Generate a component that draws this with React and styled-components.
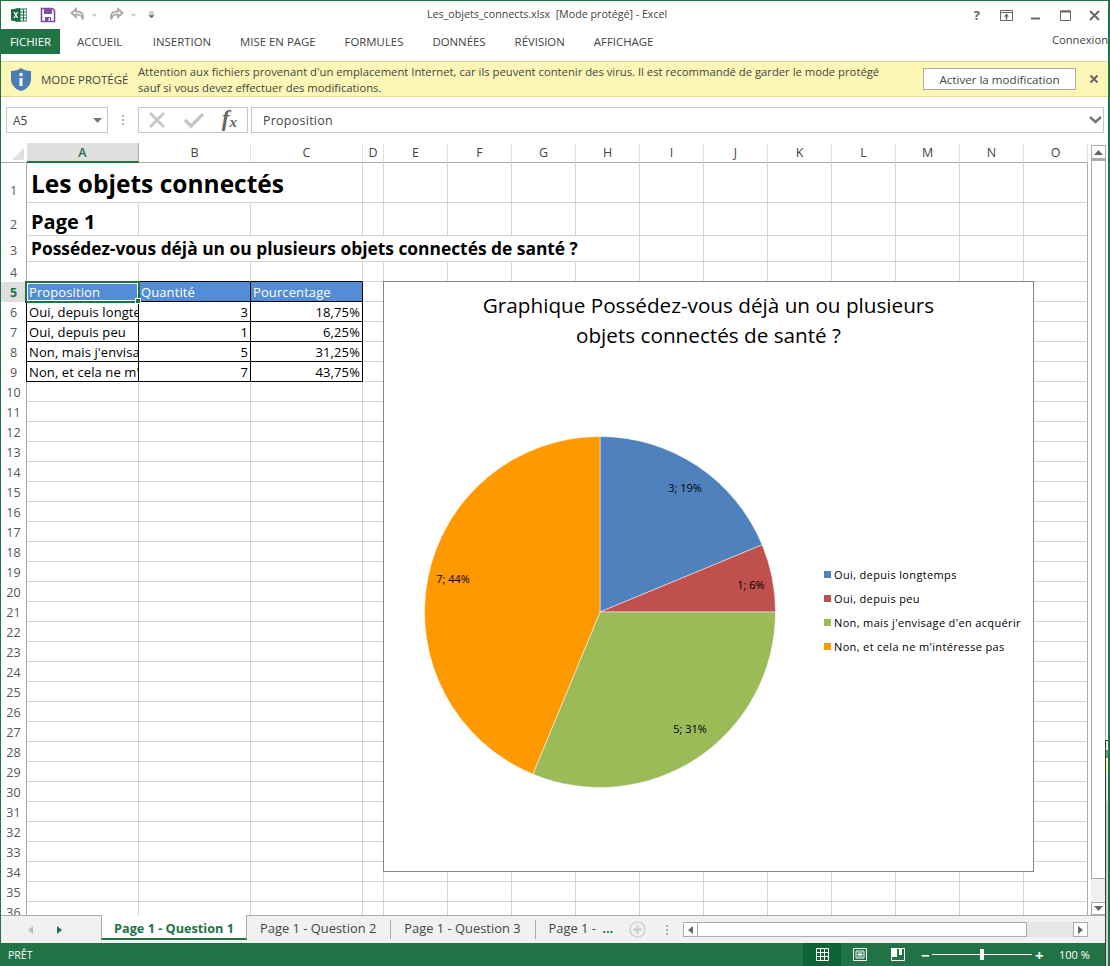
import React from 'react';
import styled, {createGlobalStyle} from 'styled-components';

const GREEN = '#217346';
const UI_FONT = '"Open Sans", "Noto Sans", sans-serif';

const columns = [
    {name: 'A', width: 112, active: true}, {name: 'B', width: 112}, {name: 'C', width: 112},
    {name: 'D', width: 21}, {name: 'E', width: 64}, {name: 'F', width: 64}, {name: 'G', width: 64},
    {name: 'H', width: 64}, {name: 'I', width: 64}, {name: 'J', width: 64}, {name: 'K', width: 64},
    {name: 'L', width: 64}, {name: 'M', width: 64}, {name: 'N', width: 64}, {name: 'O', width: 64},
];

const rowHeights = [40, 33, 26, 20];
for (let i = 0; i < 32; i++) rowHeights.push(20);

const tableRows = [
    ['Oui, depuis longtemps', '3', '18,75%'],
    ['Oui, depuis peu', '1', '6,25%'],
    ["Non, mais j'envisage d'en acquérir", '5', '31,25%'],
    ["Non, et cela ne m'intéresse pas", '7', '43,75%'],
];

const legend = [
    {label: 'Oui, depuis longtemps', color: '#4f81bd'},
    {label: 'Oui, depuis peu', color: '#c0504d'},
    {label: "Non, mais j'envisage d'en acquérir", color: '#9bbb59'},
    {label: "Non, et cela ne m'intéresse pas", color: '#ff9900'},
];

const slices = [
    {value: 18.75, color: '#4f81bd'},
    {value: 6.25, color: '#c0504d'},
    {value: 31.25, color: '#9bbb59'},
    {value: 43.75, color: '#ff9900'},
];

const slicePath = (start, end) => {
    const r = 175.5, c = 176;
    const point = (p) => {
        const a = (p / 100) * 2 * Math.PI;
        return `${c + r * Math.sin(a)} ${c - r * Math.cos(a)}`;
    };
    return `M${c} ${c} L${point(start)} A${r} ${r} 0 ${end - start > 50 ? 1 : 0} 1 ${point(end)} Z`;
};

// long titles spill over the next cells, and those lose their gridline
const spillsOver = (row, col) => (row === 0 && col < 2) || (row === 2 && col < 7);

const renderCell = (row, col) => {
    if (row === 0 && col === 0) return <Title>Les objets connectés</Title>;
    if (row === 1 && col === 0) return <PageTitle>Page 1</PageTitle>;
    if (row === 2 && col === 0) return <Question>Possédez-vous déjà un ou plusieurs objets connectés de santé ?</Question>;
    return null;
};

export default function App() {
    let accumulated = 0;

    return (
        <>
            <GlobalStyle />
            <Window>
                <TitleBar>
                    <QuickAccess>
                        <svg width="16" height="16" viewBox="0 0 16 16">
                            <rect x="5" y="2" width="11" height="12" fill="#fff" stroke={GREEN} />
                            <path d="M9 2v12M12.5 2v12M5 5h11M5 8h11M5 11h11" stroke={GREEN} strokeWidth="1" />
                            <path d="M0 2.5 9 1v14L0 13.5z" fill="#1e6b41" />
                            <path d="M2.4 5h1.5l.9 1.8L5.8 5h1.4L5.5 8l1.8 3H5.8l-1-1.9L3.8 11H2.4l1.7-3z" fill="#fff" />
                        </svg>
                        <svg width="16" height="16" viewBox="0 0 16 16" style={{marginLeft: 13}}>
                            <path d="M1.5 1.5h11l2 2v11h-13z" fill="none" stroke="#7e4ea3" strokeWidth="1.6" />
                            <path d="M4 1.5h8v5.5H4z" fill="#7e4ea3" />
                            <path d="M5 10h6v5H5z" fill="#7e4ea3" />
                            <path d="M8.6 11h1.4v3H8.6z" fill="#fff" />
                        </svg>
                        <svg width="34" height="16" viewBox="0 0 34 16" style={{marginLeft: 14}}>
                            <path d="M6 2 1.5 6 6 10V7.400c4 0 6 .8 6.500 5 1.500-5-.5-8-6.500-8z" fill="none" stroke="#a8a8a8" strokeWidth="1.8" />
                            <path d="M22 7h5l-2.500 3z" fill="#c6c6c6" />
                        </svg>
                        <svg width="34" height="16" viewBox="0 0 34 16" style={{marginLeft: 6}}>
                            <path d="M8 2l4.500 4L8 10V7.400c-4 0-6 .8-6.500 5-1.500-5 .5-8 6.500-8z" fill="none" stroke="#a8a8a8" strokeWidth="1.8" />
                            <path d="M21 7h5l-2.500 3z" fill="#c6c6c6" />
                        </svg>
                        <svg width="7" height="8" viewBox="0 0 7 8" style={{marginLeft: 4}}>
                            <path d="M1 1h5M1 3h5M1 4.500h5L3.500 7z" fill="#666" stroke="#666" strokeWidth=".6" />
                        </svg>
                    </QuickAccess>
                    <WindowTitle>Les_objets_connects.xlsx  [Mode protégé] - Excel</WindowTitle>
                    <WindowControls>
                        <HelpMark>?</HelpMark>
                        <svg width="13" height="11" viewBox="0 0 13 11" style={{marginLeft: 20}}>
                            <path d="M.5 .5h12v10H.5zM.5 2.500h12" fill="none" stroke="#666" />
                            <path d="M6.500 3.500 9 6.500H7.300v3H5.700v-3H4z" fill="#666" />
                        </svg>
                        <svg width="11" height="11" viewBox="0 0 11 11" style={{marginLeft: 17}}>
                            <path d="M1 8.500h9" stroke="#666" strokeWidth="2" />
                        </svg>
                        <svg width="11" height="11" viewBox="0 0 11 11" style={{marginLeft: 19}}>
                            <path d="M.5 1h10v9.500H.5z" fill="none" stroke="#666" />
                            <path d="M.5 1.500h10" stroke="#666" strokeWidth="2" />
                        </svg>
                        <svg width="11" height="11" viewBox="0 0 11 11" style={{marginLeft: 18}}>
                            <path d="M1 1l9 9M10 1l-9 9" stroke="#666" strokeWidth="2" />
                        </svg>
                    </WindowControls>
                </TitleBar>

                <RibbonTabs>
                    <FileTab>FICHIER</FileTab>
                    <RibbonTab>ACCUEIL</RibbonTab>
                    <RibbonTab>INSERTION</RibbonTab>
                    <RibbonTab>MISE EN PAGE</RibbonTab>
                    <RibbonTab>FORMULES</RibbonTab>
                    <RibbonTab>DONNÉES</RibbonTab>
                    <RibbonTab>RÉVISION</RibbonTab>
                    <RibbonTab>AFFICHAGE</RibbonTab>
                    <SignIn>Connexion</SignIn>
                </RibbonTabs>

                <ProtectedBar>
                    <svg width="20" height="23" viewBox="0 0 20 23">
                        <path d="M10 0c2.500 2 6 3 10 3v8c0 6-4 10-10 12C4 21 0 17 0 11V3c4 0 7.500-1 10-3z" fill="#4a7db8" />
                        <circle cx="10" cy="6.500" r="1.800" fill="#fff" />
                        <path d="M8.500 10h3v8h-3z" fill="#fff" />
                    </svg>
                    <ProtectedLabel>MODE PROTÉGÉ</ProtectedLabel>
                    <ProtectedMessage>
                        Attention aux fichiers provenant d'un emplacement Internet, car ils peuvent contenir des virus. Il est recommandé de garder le mode protégé
                        <br />
                        sauf si vous devez effectuer des modifications.
                    </ProtectedMessage>
                    <EnableButton>Activer la modification</EnableButton>
                    <svg width="10" height="10" viewBox="0 0 10 10" style={{marginLeft: 13}}>
                        <path d="M1.500 1.500l7 7M8.500 1.500l-7 7" stroke="#666" strokeWidth="2" />
                    </svg>
                </ProtectedBar>

                <FormulaBar>
                    <NameBox>
                        A5
                        <svg width="9" height="5" viewBox="0 0 9 5"><path d="M0 0h9L4.500 5z" fill="#777" /></svg>
                    </NameBox>
                    <Grip />
                    <FormulaButtons>
                        <svg width="18" height="18" viewBox="0 0 18 18">
                            <path d="M2 2l14 14M16 2 2 16" stroke="#c6c6c6" strokeWidth="2.500" />
                        </svg>
                        <svg width="20" height="18" viewBox="0 0 20 18">
                            <path d="M1 9l6 6L19 3" fill="none" stroke="#c6c6c6" strokeWidth="3.500" />
                        </svg>
                        <FxLabel>f<sub>x</sub></FxLabel>
                    </FormulaButtons>
                    <FormulaInput>
                        Proposition
                        <svg width="13" height="8" viewBox="0 0 13 8">
                            <path d="M1 1l5.500 5L12 1" fill="none" stroke="#777" strokeWidth="2.500" />
                        </svg>
                    </FormulaInput>
                </FormulaBar>

                <SheetArea>
                    <SheetMain>
                        <ColumnHeaders>
                            <Corner><CornerMark /></Corner>
                            {columns.map((col) => (
                                <ColumnHeader key={col.name} $width={col.width} $active={col.active}>{col.name}</ColumnHeader>
                            ))}
                        </ColumnHeaders>
                        <SheetBody>
                            {rowHeights.map((height, row) => (
                                <SheetRow key={row} $height={height}>
                                    <RowHeader $active={row === 4} $table={row >= 5 && row <= 8} $pad={row === 0 ? 5 : row < 3 ? 4 : 2}>
                                        {row + 1}
                                    </RowHeader>
                                    {columns.map((col, c) => {
                                        if (row === 4 && c < 3) {
                                            return (
                                                <HeadCell key={col.name} $width={col.width}>
                                                    {['Proposition', 'Quantité', 'Pourcentage'][c]}
                                                    {c === 0 && <Selection><SelectionHandle /></Selection>}
                                                </HeadCell>
                                            );
                                        }
                                        if (row >= 5 && row <= 8 && c < 3) {
                                            return (
                                                <DataCell key={col.name} $width={col.width} $number={c > 0}>
                                                    {tableRows[row - 5][c]}
                                                </DataCell>
                                            );
                                        }
                                        return (
                                            <Cell key={col.name} $width={col.width} $spill={spillsOver(row, c)} $aboveTable={row === 3 && c < 3}>
                                                {renderCell(row, c)}
                                            </Cell>
                                        );
                                    })}
                                </SheetRow>
                            ))}
                            <Chart>
                                <ChartTitle>
                                    Graphique Possédez-vous déjà un ou plusieurs
                                    <br />
                                    objets connectés de santé ?
                                </ChartTitle>
                                <ChartBody>
                                    <svg width="352" height="352" viewBox="0 0 352 352">
                                        {slices.map((s) => {
                                            const start = accumulated;
                                            accumulated += s.value;
                                            return <path key={s.color} d={slicePath(start, accumulated)} fill={s.color} stroke="#fff" strokeWidth=".5" />;
                                        })}
                                        <PieLabel x="261" y="56" textAnchor="middle">3; 19%</PieLabel>
                                        <PieLabel x="327" y="153" textAnchor="middle">1; 6%</PieLabel>
                                        <PieLabel x="266" y="297" textAnchor="middle">5; 31%</PieLabel>
                                        <PieLabel x="29" y="147" textAnchor="middle">7; 44%</PieLabel>
                                    </svg>
                                    <Legend>
                                        {legend.map((item) => (
                                            <LegendItem key={item.label}>
                                                <LegendSwatch $color={item.color} />
                                                {item.label}
                                            </LegendItem>
                                        ))}
                                    </Legend>
                                </ChartBody>
                            </Chart>
                        </SheetBody>
                    </SheetMain>
                    <VerticalScroll>
                        <ScrollButton $height={14}>
                            <svg width="9" height="5" viewBox="0 0 9 5"><path d="M0 5h9L4.500 0z" fill="#666" /></svg>
                        </ScrollButton>
                        <VerticalThumb />
                        <ScrollButton $height={13}>
                            <svg width="9" height="5" viewBox="0 0 9 5"><path d="M0 0h9L4.500 5z" fill="#666" /></svg>
                        </ScrollButton>
                    </VerticalScroll>
                </SheetArea>

                <TabStrip>
                    <TabNav>
                        <svg width="5" height="8" viewBox="0 0 5 8"><path d="M5 0v8L0 4z" fill="#bdbdbd" /></svg>
                        <svg width="5" height="8" viewBox="0 0 5 8"><path d="M0 0v8l5-4z" fill={GREEN} /></svg>
                    </TabNav>
                    <ActiveSheetTab>Page 1 - Question 1</ActiveSheetTab>
                    <SheetTab>Page 1 - Question 2</SheetTab>
                    <TabDivider />
                    <SheetTab>Page 1 - Question 3</SheetTab>
                    <TabDivider />
                    <CutSheetTab>Page 1 - <Ellipsis>...</Ellipsis></CutSheetTab>
                    <svg width="17" height="17" viewBox="0 0 17 17">
                        <circle cx="8.500" cy="8.500" r="7.500" fill="none" stroke="#c8c8c8" strokeWidth="1.200" />
                        <path d="M8.500 4.500v8M4.500 8.500h8" stroke="#c8c8c8" strokeWidth="2" />
                    </svg>
                    <StripGrip />
                    <HorizontalScroll>
                        <ArrowBox>
                            <svg width="5" height="8" viewBox="0 0 5 8"><path d="M5 0v8L0 4z" fill="#666" /></svg>
                        </ArrowBox>
                        <HorizontalThumb />
                        <ScrollTrack />
                        <ArrowBox>
                            <svg width="5" height="8" viewBox="0 0 5 8"><path d="M0 0v8l5-4z" fill="#666" /></svg>
                        </ArrowBox>
                    </HorizontalScroll>
                </TabStrip>

                <StatusBar>
                    <StatusText>PRÊT</StatusText>
                    <ViewButtons>
                        <ViewButton $active>
                            <svg width="13" height="13" viewBox="0 0 13 13">
                                <path d="M.5 .5h12v12H.5zM4.500 .5v12M8.500 .5v12M.5 4.500h12M.5 8.500h12" fill="none" stroke="#fff" />
                            </svg>
                        </ViewButton>
                        <ViewButton>
                            <svg width="14" height="13" viewBox="0 0 14 13">
                                <path d="M.5 .5h13v12H.5zM3 3h8v7H3z" fill="none" stroke="#fff" />
                                <path d="M4.500 5h5M4.500 6.500h5M4.500 8h5" stroke="#fff" />
                            </svg>
                        </ViewButton>
                        <ViewButton>
                            <svg width="14" height="13" viewBox="0 0 14 13">
                                <path d="M.5 .5h13v12H.5z" fill="none" stroke="#fff" />
                                <path d="M0 0h6v9H0zM8 0h3v7H8z" fill="#fff" />
                            </svg>
                        </ViewButton>
                    </ViewButtons>
                    <ZoomControl>
                        <ZoomSign>−</ZoomSign>
                        <ZoomSlider><ZoomThumb /></ZoomSlider>
                        <ZoomSign>+</ZoomSign>
                    </ZoomControl>
                    <ZoomValue>100 %</ZoomValue>
                </StatusBar>
                <WindowBehind />
            </Window>
        </>
    );
}

const GlobalStyle = createGlobalStyle`
    html, body {
        margin: 0;
        padding: 0;
        background: #fff;
    }
    sub {
        font-size: 15px;
        vertical-align: -1px;
    }
`

const Window = styled.div`
    width: 1110px;
    height: 966px;
    box-sizing: border-box;
    border-top: 1px solid ${GREEN};
    border-left: 1px solid ${GREEN};
    border-right: 2px solid ${GREEN};
    display: flex;
    flex-direction: column;
    overflow: hidden;
    position: relative;
    font-family: ${UI_FONT};
    color: #444;
    background: #fff;
`

// edge of another window that sticks out on the right of the screen
const WindowBehind = styled.div`
    position: absolute;
    left: 1104px;
    top: 739px;
    width: 5px;
    height: 227px;
    box-sizing: border-box;
    border-left: 1px solid #3c3c3c;
    border-top: 1px solid #3c3c3c;
    background: linear-gradient(#e8eeea 0 9px, #5f9e7f 9px 17px, #f6f3b5 17px 30px, #dfe8e3 30px 60px, #c4d4cc 60px);
`

const TitleBar = styled.div`
    height: 28px;
    display: flex;
    align-items: center;
    position: relative;
    flex: none;
`

const QuickAccess = styled.div`
    display: flex;
    align-items: center;
    padding-left: 10px;
`

const WindowTitle = styled.div`
    position: absolute;
    left: 426px;
    top: 6px;
    font-size: 10.7px;
    white-space: pre;
    color: #444;
`

const WindowControls = styled.div`
    margin-left: auto;
    display: flex;
    align-items: center;
    padding-right: 8px;
`

const HelpMark = styled.span`
    font-size: 13px;
    font-weight: 700;
    color: #666;
    line-height: 14px;
`

const RibbonTabs = styled.div`
    height: 25px;
    flex: none;
    display: flex;
    align-items: stretch;
    font-size: 11.4px;
`

const FileTab = styled.div`
    width: 59px;
    background: ${GREEN};
    color: #fff;
    display: flex;
    align-items: center;
    justify-content: center;
`

const RibbonTab = styled.div`
    margin-left: 17px;
    margin-right: 12px;
    display: flex;
    align-items: center;
    color: #444;
    &:nth-child(2) {
        margin-right: 13.5px;
    }
`

const SignIn = styled.div`
    margin-left: auto;
    font-size: 11.2px;
    color: #444;
    padding-top: 3px;
`

const ProtectedBar = styled.div`
    margin-top: 7px;
    height: 34px;
    flex: none;
    display: flex;
    align-items: center;
    padding-left: 10px;
    background: #fcf7b6;
    border-top: 1px solid #e2d98c;
    border-bottom: 1px solid #e2d98c;
`

const ProtectedLabel = styled.div`
    margin-left: 10px;
    width: 97px;
    font-size: 11.5px;
    color: #444;
    white-space: nowrap;
`

const ProtectedMessage = styled.div`
    font-size: 11.27px;
    line-height: 16px;
    padding-top: 1px;
    color: #444;
    width: 785px;
    white-space: nowrap;
`

const EnableButton = styled.div`
    width: 153px;
    height: 22px;
    box-sizing: border-box;
    border: 1px solid #ababab;
    background: #fff;
    font-size: 11.6px;
    color: #444;
    display: flex;
    align-items: center;
    justify-content: center;
`

const FormulaBar = styled.div`
    margin-top: 10px;
    height: 26px;
    flex: none;
    display: flex;
    align-items: stretch;
    padding-left: 5px;
`

const NameBox = styled.div`
    width: 102px;
    box-sizing: border-box;
    border: 1px solid #c6c6c6;
    display: flex;
    align-items: center;
    justify-content: space-between;
    padding: 0 5px 0 6px;
    font-size: 12px;
    color: #444;
`

const Grip = styled.div`
    width: 2px;
    height: 10px;
    align-self: center;
    margin: 0 14px;
    background: repeating-linear-gradient(#b0b0b0 0 2px, transparent 2px 4px);
`

const FormulaButtons = styled.div`
    width: 110px;
    box-sizing: border-box;
    border: 1px solid #c6c6c6;
    display: flex;
    align-items: center;
    justify-content: space-between;
    padding: 0 10px 0 9px;
`

const FxLabel = styled.span`
    font-family: "Liberation Serif", serif;
    font-style: italic;
    font-weight: 700;
    font-size: 23px;
    color: #666;
    line-height: 22px;
`

const FormulaInput = styled.div`
    width: 853px;
    margin-left: 3px;
    box-sizing: border-box;
    border: 1px solid #c6c6c6;
    display: flex;
    align-items: center;
    justify-content: space-between;
    padding: 0 1px 0 11px;
    font-size: 12.4px;
    letter-spacing: .3px;
    color: #444;
`

const SheetArea = styled.div`
    margin-top: 10px;
    flex: 1;
    min-height: 0;
    display: flex;
`

const SheetMain = styled.div`
    width: 1087px;
    flex: none;
`

const ColumnHeaders = styled.div`
    display: flex;
    height: 20px;
`

const Corner = styled.div`
    width: 26px;
    flex: none;
    display: flex;
    align-items: flex-end;
    justify-content: flex-end;
    padding: 0 3px 2px 0;
    box-sizing: border-box;
    border-bottom: 1px solid #ababab;
`

const CornerMark = styled.div`
    width: 0;
    height: 0;
    border-left: 12px solid transparent;
    border-bottom: 12px solid #dfdfdf;
`

const ColumnHeader = styled.div`
    width: ${props => props.$width}px;
    flex: none;
    box-sizing: border-box;
    font-size: 12.5px;
    display: flex;
    align-items: center;
    justify-content: center;
    color: ${props => props.$active ? GREEN : '#444'};
    font-weight: ${props => props.$active ? 600 : 400};
    background: ${props => props.$active ? '#dfdfdf' : '#fff'};
    border-right: 1px solid ${props => props.$active ? '#ababab' : '#e1e1e1'};
    border-bottom: ${props => props.$active ? `2px solid ${GREEN}` : '1px solid #ababab'};
`

const SheetBody = styled.div`
    position: relative;
    width: 1087px;
    height: 752px;
    overflow: hidden;
`

const SheetRow = styled.div`
    display: flex;
    height: ${props => props.$height}px;
`

const RowHeader = styled.div`
    width: 26px;
    flex: none;
    box-sizing: border-box;
    font-size: 12.5px;
    line-height: 14px;
    display: flex;
    align-items: flex-end;
    justify-content: center;
    padding-bottom: ${props => props.$pad}px;
    color: ${props => props.$active ? GREEN : '#555'};
    font-weight: ${props => props.$active ? 700 : 400};
    background: ${props => props.$active ? '#dfdfdf' : '#fff'};
    border-right: 1px solid ${props => props.$table ? '#000' : '#ababab'};
`

const Cell = styled.div`
    width: ${props => props.$width}px;
    flex: none;
    box-sizing: border-box;
    border-right: 1px solid ${props => props.$spill ? 'transparent' : '#d4d4d4'};
    border-bottom: 1px solid ${props => props.$aboveTable ? '#000' : '#d4d4d4'};
    position: relative;
    &:last-child {
        border-right-color: #ababab;
    }
`

const overflowText = `
    position: absolute;
    left: 4px;
    white-space: nowrap;
    color: #000;
    font-weight: 700;
`

const Title = styled.div`
    ${overflowText}
    top: 5px;
    font-size: 24.5px;
    line-height: 32px;
`

const PageTitle = styled.div`
    ${overflowText}
    top: 5px;
    font-size: 20px;
    line-height: 28px;
`

const Question = styled.div`
    ${overflowText}
    top: 0;
    font-size: 17.37px;
    line-height: 24px;
`

const HeadCell = styled.div`
    width: ${props => props.$width}px;
    flex: none;
    box-sizing: border-box;
    position: relative;
    background: #538dd5;
    color: #fff;
    font-size: 13px;
    letter-spacing: .1px;
    line-height: 18px;
    padding: 1px 0 0 2px;
    border-right: 1px solid #000;
    border-bottom: 1px solid #000;
`

const Selection = styled.span`
    position: absolute;
    left: -2px;
    top: -1px;
    right: -2px;
    bottom: -2px;
    border: 2px solid ${GREEN};
    box-shadow: inset 0 0 0 1px #fff;
    z-index: 1;
`

const SelectionHandle = styled.span`
    position: absolute;
    right: -3px;
    bottom: -3px;
    width: 4px;
    height: 4px;
    background: ${GREEN};
    border: 1px solid #fff;
`

const DataCell = styled.div`
    width: ${props => props.$width}px;
    flex: none;
    box-sizing: border-box;
    overflow: hidden;
    white-space: nowrap;
    color: #000;
    font-size: 13px;
    letter-spacing: .1px;
    line-height: 19px;
    text-align: ${props => props.$number ? 'right' : 'left'};
    padding: 1px ${props => props.$number ? 2 : 0}px 0 ${props => props.$number ? 0 : 2}px;
    border-right: 1px solid #000;
    border-bottom: 1px solid #000;
`

const Chart = styled.div`
    position: absolute;
    left: 382px;
    top: 118px;
    width: 651px;
    height: 591px;
    box-sizing: border-box;
    border: 1px solid #868686;
    background: #fff;
    display: flex;
    flex-direction: column;
    z-index: 2;
`

const ChartTitle = styled.div`
    text-align: center;
    font-size: 20.7px;
    line-height: 30px;
    color: #000;
    padding: 8px 0 0 0;
`

const ChartBody = styled.div`
    display: flex;
    align-items: flex-start;
    padding: 86px 0 0 40px;
`

const PieLabel = styled.text`
    font-family: ${UI_FONT};
    font-size: 11px;
    fill: #000;
`

const Legend = styled.div`
    margin: 130px 0 0 48px;
    display: flex;
    flex-direction: column;
    gap: 8.3px;
`

const LegendItem = styled.div`
    display: flex;
    align-items: center;
    gap: 3px;
    height: 16px;
    font-size: 11px;
    letter-spacing: .35px;
    color: #000;
    white-space: nowrap;
`

const LegendSwatch = styled.span`
    width: 7px;
    height: 7px;
    background: ${props => props.$color};
`

const VerticalScroll = styled.div`
    margin: 2px 0 0 3px;
    width: 15px;
    height: 770px;
    display: flex;
    flex-direction: column;
    background: #f0f0f0;
`

const ScrollButton = styled.div`
    height: ${props => props.$height}px;
    flex: none;
    box-sizing: border-box;
    border: 1px solid #ababab;
    background: #fff;
    display: flex;
    align-items: center;
    justify-content: center;
`

const VerticalThumb = styled.div`
    height: 720px;
    flex: none;
    box-sizing: border-box;
    border: 1px solid #ababab;
    border-top: 2px solid #ababab;
    background: #fff;
    margin-bottom: auto;
`

const TabStrip = styled.div`
    height: 28px;
    flex: none;
    box-sizing: border-box;
    display: flex;
    align-items: center;
    background: #f1f1f1;
    border-top: 1px solid #ababab;
    font-size: 12.9px;
    color: #444;
`

const TabNav = styled.div`
    width: 100px;
    height: 100%;
    display: flex;
    align-items: center;
    gap: 24px;
    padding-left: 27px;
    box-sizing: border-box;
`

const ActiveSheetTab = styled.div`
    width: 146px;
    height: 25px;
    align-self: flex-start;
    box-sizing: border-box;
    background: #fff;
    border-left: 1px solid #ababab;
    border-right: 1px solid #ababab;
    border-bottom: 2px solid ${GREEN};
    color: ${GREEN};
    font-size: 12.7px;
    font-weight: 700;
    display: flex;
    align-items: center;
    justify-content: center;
    margin-top: -1px;
    padding-top: 3px;
`

const SheetTab = styled.div`
    padding: 0 14px 3px 13px;
    white-space: nowrap;
`

const CutSheetTab = styled(SheetTab)`
    width: 93px;
    box-sizing: border-box;
`

const TabDivider = styled.div`
    width: 1px;
    height: 19px;
    background: #ababab;
`

const Ellipsis = styled.span`
    color: ${GREEN};
    font-weight: 700;
    margin-left: 3px;
`

const StripGrip = styled.div`
    width: 2px;
    height: 10px;
    margin: 0 15px 0 20px;
    background: repeating-linear-gradient(#b0b0b0 0 2px, transparent 2px 4px);
`

const HorizontalScroll = styled.div`
    flex: 1;
    height: 15px;
    display: flex;
    margin-right: 20px;
`

const ArrowBox = styled.div`
    width: 15px;
    flex: none;
    box-sizing: border-box;
    border: 1px solid #ababab;
    background: #fff;
    display: flex;
    align-items: center;
    justify-content: center;
`

const HorizontalThumb = styled.div`
    width: 329px;
    flex: none;
    box-sizing: border-box;
    border: 1px solid #ababab;
    border-left: none;
    background: #fff;
`

const ScrollTrack = styled.div`
    flex: 1;
    background: #e6e6e6;
`

const StatusBar = styled.div`
    height: 23px;
    flex: none;
    background: ${GREEN};
    color: #fff;
    display: flex;
    align-items: center;
    font-size: 10.5px;
`

const StatusText = styled.div`
    margin-left: 7px;
    width: 795px;
`

const ViewButtons = styled.div`
    display: flex;
    height: 100%;
`

const ViewButton = styled.div`
    width: 38px;
    display: flex;
    align-items: center;
    justify-content: center;
    background: ${props => props.$active ? '#0d6333' : 'transparent'};
`

const ZoomControl = styled.div`
    display: flex;
    align-items: center;
    margin-left: 4px;
    gap: 3px;
`

const ZoomSign = styled.span`
    font-size: 15px;
    font-weight: 700;
    width: 8px;
    line-height: 16px;
    text-align: center;
`

const ZoomSlider = styled.div`
    width: 100px;
    height: 1px;
    background: #fff;
    position: relative;
`

const ZoomThumb = styled.span`
    position: absolute;
    left: 48px;
    top: -5px;
    width: 4px;
    height: 11px;
    background: #fff;
`

const ZoomValue = styled.div`
    margin-left: 16px;
    font-size: 11px;
`
